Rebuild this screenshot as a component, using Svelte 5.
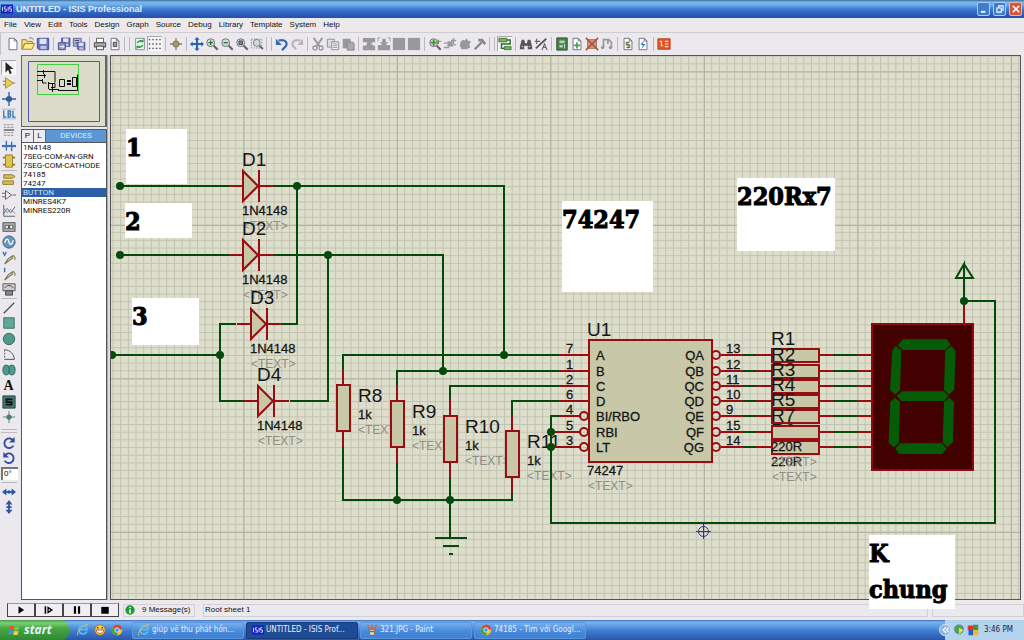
<script>
  const menus = ['File', 'View', 'Edit', 'Tools', 'Design', 'Graph', 'Source', 'Debug', 'Library', 'Template', 'System', 'Help'];

  const page = '<path d="M3.5 1.5h6l3 3v10h-9z" fill="#fff" stroke="#667"/><path d="M9.5 1.5v3h3" fill="none" stroke="#667"/>';
  const floppy = '<path d="M1.5 1.5h13v13h-11l-2-2z" fill="#6670b8" stroke="#3f478c"/><path d="M4 2h8v6H4z" fill="#dde2f6"/><path d="M5 10h7v4H5z" fill="#b9c0e4"/>';
  const lens = '<path d="M10 10l4.500 4.500" stroke="#666" stroke-width="2.500"/><circle cx="6.500" cy="6.500" r="4.500" fill="#cfdccf" stroke="#667"/>';
  const rotate = '<path d="M13 5.500A5.500 5.500 0 1 0 13 11" fill="none" stroke="#3350a0" stroke-width="2.200"/><path d="M14.500 1v6.500H8z" fill="#3350a0"/>';

  const icons = {
    new: page,
    open: '<path d="M1 3h5l1 2h6v3H4l-3 6z" fill="#f3dc75" stroke="#9a7d1d"/><path d="M4.500 7.500h11l-3 6.500h-11z" fill="#ffe98f" stroke="#9a7d1d"/><path d="M9 2c2-2 4-1 5 1" fill="none" stroke="#667"/>',
    save: floppy,
    importSection: '<g transform="translate(4 0) scale(.75)">' + floppy + '</g><path d="M1.500 6.500h8v8h-8z" fill="#8d94c4" stroke="#444c86"/><path d="M3 11h5M6 9l2 2-2 2" stroke="#fff" fill="none"/>',
    exportSection: '<path d="M1.500 1.500h9v9h-9z" fill="#b3b8d8" stroke="#555d90"/><g transform="translate(5 5) scale(.68)">' + floppy + '</g><path d="M3 4h5M3 7h3" stroke="#445"/>',
    print: '<path d="M4 1.500h8v5H4z" fill="#fff" stroke="#555"/><path d="M1.500 6.500h13v5h-13z" fill="#aaa" stroke="#444"/><path d="M4 10.500h8v4H4z" fill="#f4f4f4" stroke="#444"/>',
    area: page + '<path d="M6 6h4v5H6z" fill="#999" stroke="#444"/>',
    redraw: '<path d="M3 1.500h10v13H3z" fill="#eafaea" stroke="#789"/><path d="M5 7c1-3 4-3 5-2M11 9c-1 3-4 3-5 2" fill="none" stroke="#289a38" stroke-width="1.800"/><path d="M8 6h4V2zM8 10H4v4z" fill="#289a38"/>',
    grid: '<path d="M1 3h14M1 8h14M1 13h14" stroke="#444" stroke-width="1.500" stroke-dasharray="1.500 2.500"/>',
    origin: '<path d="M8 1v14M1 8h14" stroke="#8b8460" stroke-width="1.500"/><circle cx="8" cy="8" r="3.500" fill="#a59a68" stroke="#776e48"/>',
    pan: '<path d="M8 2v12M2 8h12" stroke="#2c62ad" stroke-width="2.500"/><path d="M8 0l3 3H5zM8 16l3-3H5zM0 8l3-3v6zM16 8l-3-3v6z" fill="#2c62ad"/>',
    zoomIn: lens + '<path d="M4 6.500h5M6.500 4v5" stroke="#287838" stroke-width="1.500"/>',
    zoomOut: lens + '<path d="M4 6.500h5" stroke="#287838" stroke-width="1.500"/>',
    zoomAll: lens + '<path d="M4.500 4.500h4v4h-4z" fill="#789" stroke="#445"/>',
    zoomArea: '<path d="M1.500 2.500h12v10h-12z" fill="none" stroke="#777" stroke-dasharray="1.500 1.500"/><g transform="translate(2 1) scale(.88)">' + lens + '</g>',
    undo: '<path d="M4 4c8-2 11 3 8 7l-4 4" fill="none" stroke="#3769b0" stroke-width="2.500"/><path d="M1 2v7h7z" fill="#3769b0"/>',
    redo: '<path d="M12 4c-8-2-11 3-8 7l3 3" fill="none" stroke="#b6b6ba" stroke-width="2.500"/><path d="M15 2v7H8z" fill="#b6b6ba"/>',
    cut: '<path d="M3 1l7 10M13 1L6 11" stroke="#999" stroke-width="2"/><circle cx="4.500" cy="12.500" r="2.200" fill="none" stroke="#999" stroke-width="1.600"/><circle cx="11.500" cy="12.500" r="2.200" fill="none" stroke="#999" stroke-width="1.600"/>',
    copy: '<path d="M1.500 2.500h8v9h-8z" fill="#ddd" stroke="#888"/><path d="M6.500 5.500h8v9h-8z" fill="#eee" stroke="#888"/><path d="M8 8h5M8 10h5M8 12h5" stroke="#999"/>',
    paste: '<path d="M2 2h9v11H2z" fill="#999"/><path d="M7 6h7l1 2v7H7z" fill="#aaa" stroke="#888"/>',
    blockCopy: '<path d="M1 1h14v5H11l2 4h2v5H1v-5h3l2-4H1z" fill="#999"/><path d="M3 8h3M10 8h3" stroke="#eee"/>',
    blockMove: '<path d="M1 9h14v6H1zM6 2h4v4h3l-5 5-5-5h3z" fill="#999"/><path d="M1 1h3M12 1h3M1 5v-4M15 5v-4" stroke="#999"/>',
    block: '<path d="M1 1h14v14H1z" fill="#999"/>',
    pick: lens + '<path d="M6.500 3v7M3 6.500h7" stroke="#3d9440" stroke-width="2"/><path d="M12 3v5M10 5h5" stroke="#7a7a48"/>',
    make: '<path d="M5 5h6v6H5z" fill="#999"/><path d="M1 7h4M1 12h6M10 9h5M12 1v7M9 4h6" stroke="#999" stroke-width="1.600"/>',
    package: '<path d="M3 5l3-2 2 1 2-3 1 3 4 1-2 3 1 4-4 2H4l-2-4z" fill="#999"/>',
    hammer: '<path d="M10 6L2 14" stroke="#888" stroke-width="2.600"/><path d="M6 2h5l4 5-2 2-4-4H6z" fill="#888"/>',
    autoroute: '<path d="M1 1.500h9v4H1zM7 11h8v3.500H7z" fill="#7db266" stroke="#3b6930"/><path d="M10 3.500h4V8H4v5h3" fill="none" stroke="#2d6b2d" stroke-width="1.600"/>',
    find: '<path d="M3 3h3l1 4h2l1-4h3l2 8v3h-5v-4H6v4H1v-3z" fill="#555"/><path d="M3 11h2M11 11h2" stroke="#ddd"/>',
    assign: '<path d="M2 13L14 2" stroke="#555" stroke-width="2"/><path d="M1 5h6M3 2v6M9 15l3-7 3 7M10 12h4" fill="none" stroke="#666" stroke-width="1.300"/>',
    explorer: '<path d="M2 1h12v14H2z" fill="#47804c" stroke="#2f5033"/><path d="M5 4h6v3H5zM5 9h4v3H5z" fill="#a9d5a8"/><path d="M11 8v5" stroke="#d9f0d9"/>',
    newSheet: page + '<path d="M8 6v7M4.500 9.500h7" stroke="#4aa04e" stroke-width="2"/>',
    removeSheet: '<path d="M3 3h10v10H3z" fill="#c8a08c" stroke="#875"/><path d="M1 1l14 14M15 1L1 15" stroke="#b9503a" stroke-width="2"/>',
    exitSheet: '<path d="M4 12V3h6l3 3v6M9 3v5" fill="none" stroke="#999" stroke-width="2"/><circle cx="3" cy="12" r="2" fill="#999"/><circle cx="12" cy="12" r="2" fill="#999"/>',
    bom: page + '<path d="M10 6H6v3h4v3H6M8 5v8" fill="none" stroke="#6d7430" stroke-width="1.200"/>',
    erc: page + '<path d="M9 4l-4 5h3l-2 5 5-6H8z" fill="#2b7ed2"/>',
    ares: '<path d="M1 2h14v12H1z" fill="#e2552a" stroke="#b43b18"/><path d="M3 5h2v5h2M9 5h4M9 8h4M9 11h4" fill="none" stroke="#ffd9b8" stroke-width="1.300"/>',

    select: '<path d="M4 1v12l3-3 2 5 2-1-2-5h4z" fill="#222"/>',
    component: '<path d="M4 2v12l9-6z" fill="#e8cf58" stroke="#a08a28"/><path d="M1 6h3M1 10h3M13 8h2" stroke="#776a28"/>',
    junction: '<path d="M8 0v16M0 8h16" stroke="#2d609b" stroke-width="1.500"/><circle cx="8" cy="8" r="3.500" fill="#2d609b"/>',
    label: '<path d="M0 2.500h16M0 13.500h16" stroke="#9bb8d8"/><path d="M2 4v7.500h3M7 4.500h2l1 1-1 2 1 2-1 2H7zM7 8h2M12.500 4v7.500h3" fill="none" stroke="#2e6aa6" stroke-width="1.400"/>',
    script: '<path d="M2 2h12M2 5h12M2 11h12M2 14h12" stroke="#888" stroke-dasharray="3 1"/><path d="M2 7h12v2H2z" fill="#777"/>',
    bus: '<path d="M0 8h16" stroke="#3a73bc" stroke-width="2.500"/><path d="M5 2v11M11 3v11" stroke="#3a73bc" stroke-width="1.600"/>',
    subcircuit: '<path d="M4 1h8v14H4z" fill="#ddc450" stroke="#8d7b25"/><path d="M1 4h3M1 12h3M12 4h3M12 12h3" stroke="#8d7b25" stroke-width="2"/>',
    terminal: '<path d="M2 2h10l3 2-3 2H2zM1 9h12v4H1z" fill="#d9c04e" stroke="#83731f"/>',
    pin: '<path d="M4 3v10l7-5z" fill="#eee" stroke="#555"/><path d="M0 6h4M0 10h4M12 8h4" stroke="#555"/>',
    graph: '<path d="M2 1v13h13" fill="none" stroke="#555"/><path d="M2 11l4-6 4 5 5-7" fill="none" stroke="#3565a0"/><path d="M2 5l4 5 4-4 5 5" fill="none" stroke="#a66"/>',
    tape: '<path d="M1 3h14v10H1z" fill="#aaa" stroke="#555"/><path d="M3 6h10v4H3z" fill="#555"/><circle cx="5.500" cy="8" r="1.500" fill="#eee"/><circle cx="10.500" cy="8" r="1.500" fill="#eee"/>',
    generator: '<circle cx="8" cy="8" r="7" fill="#6597ba" stroke="#38566e"/><path d="M3 9c2-6 4-5 5-1s3 4 5-2" fill="none" stroke="#fff" stroke-width="1.400"/>',
    vProbe: '<path d="M1 1l2 4 2-4" fill="none" stroke="#346bb3" stroke-width="1.300"/><path d="M3 15l4-6 4-3 1 2-4 3zM11 7c2-4 4 0 4 3" fill="none" stroke="#77774a" stroke-width="1.300"/>',
    iProbe: '<path d="M3 1v5" stroke="#346bb3" stroke-width="1.600"/><path d="M3 15l4-6 4-3 1 2-4 3zM11 7c2-4 4 0 4 3" fill="none" stroke="#77774a" stroke-width="1.300"/>',
    meter: '<path d="M1 2h14v8H1z" fill="#ccc" stroke="#555"/><path d="M3 7c3-4 7-4 10 0" fill="none" stroke="#444"/><path d="M4 10h8v5H4z" fill="#888" stroke="#444"/>',
    line: '<path d="M2 14L14 2" stroke="#444" stroke-width="1.300"/>',
    box: '<path d="M2 2h12v12H2z" fill="#5fa79b" stroke="#3a6a62"/>',
    circle: '<circle cx="8" cy="8" r="6.500" fill="#4f9a8e" stroke="#2f5f58"/>',
    arc: '<path d="M3 2c6 0 11 5 11 11H3" fill="none" stroke="#444"/><path d="M3 2v11" stroke="#444" stroke-dasharray="2 1.500"/>',
    shape: '<path d="M8 4c3-3 7-2 7 4s-4 7-7 4c-3 3-7 2-7-4s4-7 7-4z" fill="#4f9a8e" stroke="#2f5f58"/><path d="M8 4v8" stroke="#2f5f58"/>',
    symbol: '<path d="M1 1h14v14H1z" fill="#3f7a70" stroke="#253f3b"/><path d="M12 5H5v3h6v3H4" fill="none" stroke="#111" stroke-width="2"/>',
    marker: '<path d="M8 1v14M1 8h14" stroke="#557a74"/><circle cx="8" cy="8" r="3" fill="#557a74"/>',
    cw: rotate,
    ccw: '<g transform="translate(16 0) scale(-1 1)">' + rotate + '</g>',
    flipH: '<path d="M0 8l5-4v8zM16 8l-5-4v8z" fill="#2d57a0"/><path d="M4 8h8" stroke="#2d57a0" stroke-width="2"/><circle cx="8" cy="8" r="2" fill="#2d57a0"/>',
    flipV: '<path d="M8 0l4 5H4zM8 16l4-5H4z" fill="#2d57a0"/><path d="M8 4v8M5 8h6" stroke="#2d57a0" stroke-width="2"/>',

    ie: '<path d="M13 10a5.500 5.500 0 1 1 .5-2.500H4" fill="none" stroke="#58b9f4" stroke-width="2.400"/><path d="M1 15C-1 11 9 0 15 1" fill="none" stroke="#e9c34b" stroke-width="1.300"/>',
    smiley: '<circle cx="8" cy="8" r="7" fill="#f7cf42" stroke="#a8661b"/><path d="M3 8h10c0 6-10 6-10 0z" fill="#fff" stroke="#9c331a"/><path d="M5 4v2M11 4v2" stroke="#3a2308" stroke-width="1.600"/>',
    chrome: '<circle cx="8" cy="8" r="7" fill="#e9c52f"/><path d="M8 8L2 4.500A7 7 0 0 1 15 7z" fill="#d9402f"/><path d="M8 8L2 4.500A7 7 0 0 0 8 15l2-5z" fill="#43a047"/><circle cx="8" cy="8" r="3" fill="#4b8ff0" stroke="#fff"/>',
    isis: '<path d="M0 2h16v12H0z" fill="#1420c0"/><path d="M2 5v6M7 5H4.500v3H7v3H4.500M9.500 5v6M14 5h-2.500v3H14v3h-2.500" fill="none" stroke="#dfe4ff" stroke-width="1.200"/>',
    paint: '<path d="M4 7h8l-1 8H5z" fill="#e8ddc0" stroke="#6b5a35"/><path d="M5 7L2 1M8 7V1M11 7l3-6" stroke="#d7672a" stroke-width="2"/><path d="M5 10h6" stroke="#2d79c9" stroke-width="2"/>',
    windows: '<path d="M2 3c2-1 4-1 6 0L7 8C5 7 3 7 1 8z" fill="#e8562c"/><path d="M9 3c2 1 4 1 6 0l-1 5c-2 1-4 1-6 0z" fill="#7cc243"/><path d="M1 9c2-1 4-1 6 0l-1 5c-2-1-4-1-6 0z" fill="#4a90e2"/><path d="M8 9c2 1 4 1 6 0l-1 5c-2 1-4 1-6 0z" fill="#f6cf3a"/>',
    info: '<circle cx="8" cy="8" r="7.500" fill="#259b35"/><path d="M8 7v6M8 3v2" stroke="#fff" stroke-width="2.400"/>',
    play: '<path d="M4 2l9 6-9 6z"/>',
    step: '<path d="M1 2h2.500v12H1zM5.500 2l9 6-9 6z"/><path d="M7.500 6l3 2-3 2z" fill="#eee"/>',
    pause: '<path d="M3 2h3.500v12H3zM9.500 2H13v12H9.500z"/>',
    stop: '<path d="M2 3h12v11H2z"/>',
    minimize: '<path d="M3 11h7v3H3z" fill="#fff"/>',
    restore: '<path d="M6 6V3h7v7h-3M3 6.500h7V13H3z" fill="none" stroke="#fff" stroke-width="1.700"/>',
    close: '<path d="M3 3l10 10M13 3L3 13" stroke="#fff" stroke-width="2.500"/>',
    hide: '<circle cx="8" cy="8" r="7.500" fill="#8db4e0" stroke="#e3effa"/><path d="M9.500 4l-4 4 4 4M13 5l-3 3 3 3" fill="none" stroke="#fff" stroke-width="1.600"/>',
    download: '<circle cx="8" cy="7" r="6.500" fill="#4a88cf"/><path d="M2 5c4-5 7-3 12-1L9 8l1 7-6-6z" fill="#54a637"/><path d="M8 5l6 3-6 6z" fill="#dce847"/>',
    shield: '<path d="M1 2h7v6H1z" fill="#df3527"/><path d="M8 1h7v7H8z" fill="#3a9b3d"/><path d="M2 8h6v7H2z" fill="#2a5cc0"/><path d="M8 8h7v7H8z" fill="#f0b72a"/>'
  };

  // nested lists are icon groups, 'grip' starts a new toolbar
  const toolbar = [
    ['new', 'open', 'save'], '|', ['importSection', 'exportSection'], '|', ['print', 'area'], 'grip',
    ['redraw', 'grid'], '|', ['origin'], '|', ['pan', 'zoomIn', 'zoomOut', 'zoomAll', 'zoomArea'], 'grip',
    ['undo', 'redo'], '|', ['cut', 'copy', 'paste'], '|', ['blockCopy', 'blockMove', 'block', 'block'], '|',
    ['pick', 'make', 'package', 'hammer'], 'grip', ['autoroute'], '|', ['find', 'assign'], '|',
    ['explorer', 'newSheet', 'removeSheet', 'exitSheet'], '|', ['bom', 'erc'], '|', ['ares']
  ];
  const pressed = ['grid', 'autoroute', 'select'];

  const mainModes = ['select', 'component', 'junction', 'label', 'script', 'bus', 'subcircuit'];
  const gadgets = ['terminal', 'pin', 'graph', 'tape', 'generator', 'vProbe', 'iProbe', 'meter'];
  const graphics = ['line', 'box', 'circle', 'arc', 'shape', 'text', 'symbol', 'marker'];

  const devices = ['1N4148', '7SEG-COM-AN-GRN', '7SEG-COM-CATHODE', '74185', '74247', 'BUTTON', 'MINRES4K7', 'MINRES220R'];
  let selected = $state('BUTTON');
  let angle = $state('0°');

  const diodes = [
    { ref: 'D1', x: 243, y: 186 },
    { ref: 'D2', x: 243, y: 255 },
    { ref: 'D3', x: 251, y: 324 },
    { ref: 'D4', x: 258, y: 401 }
  ];
  const pulldowns = [
    { ref: 'R8', x: 343, y: 408 },
    { ref: 'R9', x: 397, y: 424 },
    { ref: 'R10', x: 450, y: 439 },
    { ref: 'R11', x: 512, y: 454 }
  ];
  // bottom one is placed before R7, so R7 covers its name
  const series = [
    { ref: 'R1', y: 355 },
    { ref: 'R2', y: 371 },
    { ref: 'R3', y: 386 },
    { ref: 'R4', y: 401 },
    { ref: 'R5', y: 416 },
    { ref: 'R6', y: 447 },
    { ref: 'R7', y: 432 }
  ];
  const pins = [
    { y: 355, left: 'A', l: 7, right: 'QA', r: 13 },
    { y: 371, left: 'B', l: 1, right: 'QB', r: 12 },
    { y: 386, left: 'C', l: 2, right: 'QC', r: 11 },
    { y: 401, left: 'D', l: 6, right: 'QD', r: 10 },
    { y: 416, left: 'BI/RBO', l: 4, right: 'QE', r: 9, inv: true },
    { y: 432, left: 'RBI', l: 5, right: 'QF', r: 15, inv: true },
    { y: 447, left: 'LT', l: 3, right: 'QG', r: 14, inv: true }
  ];
  const wires = [
    'M120 186H229M274 186H504V355', 'M120 255H229M274 255H443V371', 'M297 186V324H282',
    'M112 355H220M236 324H220V401H244', 'M290 401H328V255',
    'M343 369V355H559', 'M397 385V371H559', 'M450 400V386H559', 'M512 416V401H559',
    'M343 447V500H512V493M397 463V500M450 478V538', 'M435 538H467M443 546H459M449 554H453',
    'M559 416H551V523H995V301H964', 'M964 301V264L956 278H973L964 264'
  ];
  const dots = [[120, 186], [297, 186], [120, 255], [328, 255], [112, 355], [220, 355], [504, 355], [443, 371],
    [397, 500], [450, 500], [551, 432], [551, 447], [964, 301]];
  const segments = [
    '413,286 428,268 560,268 572,284 556,300 428,300',
    '408,288 424,302 420,420 406,434 390,420 397,300',
    '574,288 587,302 583,418 568,434 552,420 556,302',
    '410,438 426,424 552,424 566,438 552,453 424,453',
    '404,443 420,456 417,578 402,592 386,578 391,456',
    '568,443 582,456 579,576 563,591 548,578 552,456',
    '406,596 420,580 546,580 560,596 546,612 418,612'
  ];
  const notes = [
    { text: '1', x: 15, y: 73, w: 61, h: 55 },
    { text: '2', x: 14, y: 147, w: 67, h: 35 },
    { text: '3', x: 21, y: 242, w: 67, h: 47 },
    { text: '74247', x: 451, y: 145, w: 91, h: 91 },
    { text: '220Rx7', x: 626, y: 122, w: 98, h: 73 },
    { text: 'K chung', x: 758, y: 479, w: 86, h: 74 }
  ];

  const tasks = [
    { icon: 'ie', text: 'giúp vẽ thu phát hồn...' },
    { icon: 'isis', text: 'UNTITLED - ISIS Prof...', active: true },
    { icon: 'paint', text: '321.JPG - Paint' },
    { icon: 'chrome', text: '74185 - Tìm với Googl...' }
  ];
</script>

{#snippet icon(name)}
  <svg class="icon" viewBox="0 0 16 16" aria-hidden="true">{@html icons[name]}</svg>
{/snippet}

{#snippet tools(names)}
  <div class="tools" class:pair={names.length === 2}>
    {#each names as name}
      <button class="tool" class:pressed={pressed.includes(name)} aria-label={name}>
        {#if name === 'text'}<b class="letter">A</b>{:else}{@render icon(name)}{/if}
      </button>
    {/each}
  </div>
{/snippet}

<div class="window">
  <header class="title">
    {@render icon('isis')}
    <h1>UNTITLED - ISIS Professional</h1>
    <button class="caption" aria-label="Minimize">{@render icon('minimize')}</button>
    <button class="caption" aria-label="Restore">{@render icon('restore')}</button>
    <button class="caption red" aria-label="Close">{@render icon('close')}</button>
  </header>

  <nav class="menu">
    {#each menus as item}<button>{item}</button>{/each}
  </nav>

  <div class="toolbar">
    {#each toolbar as group}
      {#if group === '|'}
        <span class="sep"></span>
      {:else if group === 'grip'}
        <span class="grip"></span>
      {:else}
        {#each group as name}
          <button class="tool" class:pressed={pressed.includes(name)} aria-label={name}>{@render icon(name)}</button>
        {/each}
      {/if}
    {/each}
  </div>

  <main>
    <div class="modes">
      {@render tools(mainModes)}
      <hr />
      {@render tools(gadgets)}
      <hr />
      {@render tools(graphics)}
      <hr class="wide" />
      {@render tools(['cw', 'ccw'])}
      <input aria-label="Rotation" bind:value={angle} />
      <hr />
      {@render tools(['flipH', 'flipV'])}
    </div>

    <aside>
      <div class="overview">
        <svg viewBox="0 0 84 70" aria-label="Overview">
          <path d="M6.500 5.500h71v60h-71z" fill="none" stroke="#5555b5" />
          <path d="M15.500 8.500h41v30h-41z" fill="none" stroke="#3fcf3f" />
          <g fill="none" stroke="#111">
            <path d="M15 15.500h18v11M15 19.500h9M15 24.500h5M21.500 14v4M22.500 18v4M20.500 23v4h4M26.500 26v7M30.500 28v8M27 33.500h10" />
            <path d="M37.500 23.500h5v7h-5zM50.500 21.500h4v9h-4zM36 34.500h19.500v-16" />
            <path d="M45 25h4M45 28h4" stroke-width="2" />
            <path d="M27 27.500h6v4h-4" />
          </g>
        </svg>
      </div>
      <div class="devices">
        <div class="head">
          <button>P</button>
          <button>L</button>
          <h2>DEVICES</h2>
        </div>
        <ul>
          {#each devices as device}
            <li><button class:selected={device === selected} onclick={() => (selected = device)}>{device}</button></li>
          {/each}
        </ul>
      </div>
    </aside>

    <section class="sheet">
      <svg class="schematic" aria-label="Schematic">
        <defs>
          <pattern id="major" x="704" y="532" width="153.500" height="153.500" patternUnits="userSpaceOnUse">
            <path d="M0 0H153.500M0 0V153.500" stroke="#b2b3a1" stroke-width="2" />
          </pattern>
          <pattern id="minor" x="703.500" y="531.500" width="7.675" height="7.675" patternUnits="userSpaceOnUse">
            <path d="M0 .5H8M.5 0V8" stroke="#c1c2b0" fill="none" />
          </pattern>
        </defs>
        <g transform="translate(-111 -56)">
          <rect x="111" y="56" width="4000" height="3000" fill="url(#minor)" />
          <rect x="111" y="56" width="4000" height="3000" fill="url(#major)" />

          {#each pulldowns as { ref, x, y }}
            <path class="lead" d="M{x} {y - 39}V{y + 39}" />
            <rect class="part" x={x - 6} y={y - 23} width="13" height="46" />
            <text class="ref" x={x + 15} y={y - 6}>{ref}</text>
            <text class="val" x={x + 15} y={y + 11}>1k</text>
            <text class="hint" x={x + 15} y={y + 26}>&lt;TEXT&gt;</text>
          {/each}

          {#each diodes as { ref, x, y }}
            <text class="hint" {x} y={y + 44}>&lt;TEXT&gt;</text>
            <path class="lead" d="M{x - 14} {y}H{x}M{x + 16} {y}H{x + 31}" />
            <path class="part" d="M{x} {y - 15}V{y + 15}L{x + 15} {y}ZM{x + 16} {y - 16}V{y + 16}" />
            <text class="ref" x={x - 1} y={y - 20}>{ref}</text>
            <text class="val" x={x - 1} y={y + 29}>1N4148</text>
          {/each}

          <rect class="part" x="589" y="340" width="123" height="122" />
          <text class="ref" x="587" y="336">U1</text>
          <text class="val" x="587" y="475">74247</text>
          <text class="hint" x="588" y="490">&lt;TEXT&gt;</text>
          {#each pins as pin}
            <path class="lead" d="M{pin.inv && pin.l !== 4 ? 551 : 559} {pin.y}H{pin.inv ? 580 : 589}M721 {pin.y}H743" />
            {#if pin.inv}<circle class="bubble" cx="584" cy={pin.y} r="4" />{/if}
            <circle class="bubble" cx="716" cy={pin.y} r="4" />
            <text class="val" x="566" y={pin.y - 2}>{pin.l}</text>
            <text class="val" x="726" y={pin.y - 2}>{pin.r}</text>
            <text class="val" x="596" y={pin.y + 5}>{pin.left}</text>
            <text class="val end" x="704" y={pin.y + 5}>{pin.right}</text>
          {/each}

          {#each series as { ref, y }}
            <path class="lead" d="M756 {y}H772M819 {y}H833M857 {y}H872" />
            <path class="wire" d="M743 {y}H756M833 {y}H857" />
            <rect class="part" x="772" y={y - 6} width="47" height="13" />
            <text class="ref" x="771" y={y - 10}>{ref}</text>
            <text class="hint" x="772" y={y + 34}>&lt;TEXT&gt;</text>
            <text class="val" x="771" y={y + 19}>220R</text>
          {/each}

          <path class="lead" d="M964 301V324" />
          <rect x="872" y="324" width="101" height="146" fill="#430000" stroke="#8f0818" stroke-width="2" />
          <g transform="translate(760 250) scale(.3333)" fill="#065c06">
            {#each segments as points}<polygon {points} />{/each}
          </g>

          {#each wires as d}<path class="wire" {d} />{/each}
          {#each dots as [cx, cy]}<circle class="dot" {cx} {cy} r="4" />{/each}

          <g fill="none" stroke="#3030a0">
            <circle cx="703.500" cy="531.500" r="5" />
            <path d="M696 531.500H711M703.500 524V539" />
          </g>
        </g>
      </svg>
      {#each notes as { text, x, y, w, h }}
        <p class="note" style="left: {x}px; top: {y}px; width: {w}px; height: {h}px">{text}</p>
      {/each}
    </section>
  </main>

  <div class="status">
    <div class="sim">
      {#each ['play', 'step', 'pause', 'stop'] as name}
        <button aria-label={name}>{@render icon(name)}</button>
      {/each}
    </div>
    <div class="cell messages">{@render icon('info')}<span>9 Message(s)</span></div>
    <div class="cell sheetname">Root sheet 1</div>
    <div class="cell coords"></div>
  </div>

  <footer class="taskbar">
    <button class="start">{@render icon('windows')}<span>start</span></button>
    <div class="quick">
      {#each ['ie', 'smiley', 'chrome'] as name}
        <button aria-label={name}>{@render icon(name)}</button>
      {/each}
    </div>
    <div class="tasks">
      {#each tasks as task}
        <button class:active={task.active}>{@render icon(task.icon)}<span>{task.text}</span></button>
      {/each}
    </div>
    <div class="tray">
      {@render icon('hide')}
      {@render icon('download')}
      {@render icon('shield')}
      <time>3:46 PM</time>
    </div>
  </footer>
</div>

<style>
  :global(body) {
    margin: 0;
  }

  .window {
    display: flex;
    flex-direction: column;
    min-height: 100vh;
    background: #ebe9ed;
    color: #111;
    font: 8px/10px "Liberation Sans", Arial, sans-serif;
  }

  button {
    padding: 0;
    border: 0;
    background: none;
    color: inherit;
    font: inherit;
  }

  .icon {
    display: block;
    flex: none;
    width: 12px;
    height: 12px;
  }

  .title {
    display: flex;
    align-items: center;
    gap: 3px;
    height: 18px;
    padding: 0 2px 0 1px;
    background: linear-gradient(#3a6f9f 0, #7cb6ec 2px, #6fabe8 5px, #3a7dd0 9px, #2b5db8 14px, #2a4fa4);
  }

  .title h1 {
    flex: 1;
    margin: 0;
    color: #e3f1ff;
    font: bold 9px/16px "Liberation Sans", Arial, sans-serif;
  }

  .caption {
    display: grid;
    place-items: center;
    width: 13px;
    height: 14px;
    border: 1px solid #a9cdf3;
    border-radius: 2px;
    background: #3f7ccc;
  }

  .caption .icon {
    width: 10px;
    height: 10px;
  }

  .caption.red {
    background: #d4573a;
    border-color: #e9b5a8;
  }

  .menu {
    display: flex;
    gap: 7px;
    height: 15px;
    padding: 0 4px;
    background: linear-gradient(#e6ebf0, #f1e7e7 70%, #ebe9ed);
    border-bottom: 1px solid #cfcdd1;
    box-sizing: border-box;
  }

  .toolbar {
    display: flex;
    align-items: center;
    height: 22px;
    padding: 0 0 1px 4px;
    border-left: 1px solid #c5c3c8;
    box-sizing: border-box;
  }

  .tool {
    display: grid;
    place-items: center;
    width: 15px;
    height: 15px;
  }

  .tool .icon {
    width: 14px;
    height: 14px;
  }

  .pressed {
    background: #f3f3f5;
    box-shadow: inset 1px 1px #aaa, inset -1px -1px #fff;
  }

  .sep,
  .grip {
    width: 6px;
    height: 14px;
    background: linear-gradient(#bbb9be, #bbb9be) center / 1px 100% no-repeat;
  }

  .grip {
    width: 10px;
    background: linear-gradient(90deg, #bbb9be 1px, transparent 1px 5px, #bbb9be 5px 6px, transparent 6px) 2px 0 no-repeat;
  }

  main {
    display: flex;
    flex: 1;
  }

  .modes {
    width: 21px;
    padding-top: 5px;
    box-sizing: border-box;
  }

  .tools {
    display: grid;
    grid-auto-rows: 1fr;
    align-items: center;
    padding-left: 1px;
    height: 125px;
  }

  .tools:first-child {
    height: 109px;
  }

  .tools.pair {
    height: 31px;
  }

  .letter {
    font: bold 14px/15px "Liberation Serif", serif;
  }

  hr {
    width: 16px;
    margin: 1px;
    border: 0;
    border-top: 1px solid #bbb9be;
  }

  hr.wide {
    height: 2px;
    margin: 4px 1px 2px;
    border-bottom: 1px solid #c5b9be;
  }

  .modes input {
    display: block;
    width: 17px;
    height: 13px;
    margin: 1px 1px 2px;
    padding: 0 0 2px 1px;
    border: solid #777;
    border-width: 2px 0 0 2px;
    box-sizing: border-box;
    font: inherit;
  }

  aside {
    display: flex;
    flex-direction: column;
    gap: 2px;
    width: 86px;
    padding-right: 3px;
    background: linear-gradient(90deg, transparent 86px, #aaa 86px 87px, #ddd 87px);
  }

  .overview {
    height: 72px;
    border: 1px solid #666;
    border-right-width: 2px;
    background: #dcdcca;
    box-sizing: border-box;
  }

  .overview svg {
    display: block;
    width: 84px;
    height: 70px;
  }

  .devices {
    flex: 1;
    border: 1px solid #555;
    background: #fff;
  }

  .head {
    display: flex;
    height: 12px;
    border-bottom: 1px solid #555;
  }

  .head button {
    width: 12px;
    border-right: 1px solid #666;
    background: #eeecf0;
  }

  .head h2 {
    flex: 1;
    margin: 0;
    background: #5a97d3;
    color: #dcecfb;
    font: 8px/12px Roboto, sans-serif;
    text-align: center;
  }

  ul {
    margin: 0;
    padding: 0;
    list-style: none;
  }

  li button {
    display: block;
    width: 100%;
    padding-left: 1px;
    font: 8px/9px Roboto, sans-serif;
    text-align: left;
  }

  li .selected {
    background: #2d5fa9;
    color: #d5e5f8;
  }

  .sheet {
    position: relative;
    flex: 1;
    margin-right: 3px;
    border: 1px solid #555;
    background: #dedecc;
  }

  .schematic {
    position: absolute;
    inset: 0;
    width: 100%;
    height: 100%;
  }

  .wire {
    fill: none;
    stroke: #064a0b;
    stroke-width: 2;
  }

  .dot {
    fill: #064a0b;
  }

  .lead,
  .part,
  .bubble {
    fill: none;
    stroke: #970d10;
    stroke-width: 2;
  }

  .part {
    fill: #c8c8a8;
  }

  .ref,
  .val,
  .hint {
    fill: #161616;
    font: 13px "Liberation Sans", Arial, sans-serif;
  }

  .ref {
    font-size: 19px;
  }

  .val {
    stroke: #161616;
    stroke-width: .3;
  }

  .hint {
    fill: #8f8f85;
    font-size: 12px;
  }

  .end {
    text-anchor: end;
  }

  .note {
    position: absolute;
    margin: 0;
    padding-top: 1px;
    box-sizing: border-box;
    background: #fff;
    color: #000;
    font: bold 25px/36px "DejaVu Serif Condensed", "DejaVu Serif", serif;
    -webkit-text-stroke: 1px #000;
  }

  .status {
    display: flex;
    align-items: center;
    height: 20px;
    padding-left: 7px;
  }

  .sim {
    display: flex;
    margin-right: 4px;
  }

  .sim button {
    display: grid;
    place-items: center;
    width: 28px;
    height: 14px;
    border: 1px solid #444;
    border-top-color: #999;
    background: #f0eef2;
    box-sizing: border-box;
  }

  .sim .icon {
    width: 10px;
    height: 10px;
  }

  .cell {
    display: flex;
    align-items: center;
    gap: 7px;
    height: 13px;
    border: 1px solid #d2d0d5;
    box-sizing: border-box;
  }

  .messages {
    width: 72px;
    padding-left: 1px;
  }

  .messages .icon {
    width: 10px;
    height: 10px;
  }

  .sheetname {
    flex: 1;
    margin: 0 4px 0 8px;
    padding-left: 1px;
  }

  .coords {
    width: 92px;
  }

  .taskbar {
    display: flex;
    height: 20px;
    background: linear-gradient(#3a6ab8 0, #7db6ee 2px, #5d9ce2 6px, #3e7cd0 11px, #2b56ab);
    color: #e6f1fd;
    font: 8px/12px "DejaVu Sans Condensed", "DejaVu Sans", sans-serif;
  }

  .start {
    display: flex;
    align-items: center;
    gap: 4px;
    width: 69px;
    padding-left: 8px;
    border-radius: 0 8px 8px 0;
    background: linear-gradient(#4b9a4b 0, #7ed07a 3px, #46a846 8px, #2f8a32);
    font: italic bold 12px/18px "Open Sans", sans-serif;
    box-sizing: border-box;
  }

  .quick {
    display: flex;
    align-items: center;
    gap: 5px;
    padding: 0 9px 0 8px;
  }

  .quick .icon {
    width: 12px;
  }

  .tasks {
    display: flex;
    flex: 1;
    align-items: center;
    gap: 2px;
  }

  .tasks button {
    display: flex;
    align-items: center;
    gap: 2px;
    width: 112px;
    height: 17px;
    padding-left: 5px;
    border: 1px solid #5b96dd;
    border-radius: 2px;
    background: linear-gradient(#77b0ee, #4b8cdc 50%, #4180d2);
    box-sizing: border-box;
    white-space: nowrap;
  }

  .tasks .active {
    border-color: #163a7c;
    background: #1f4b95;
  }

  .tray {
    display: flex;
    align-items: center;
    gap: 2px;
    width: 85px;
    background: linear-gradient(90deg, transparent 6px, #b4d4ee 6px);
    color: #223;
  }

  .tray time {
    margin-left: 3px;
  }
</style>
